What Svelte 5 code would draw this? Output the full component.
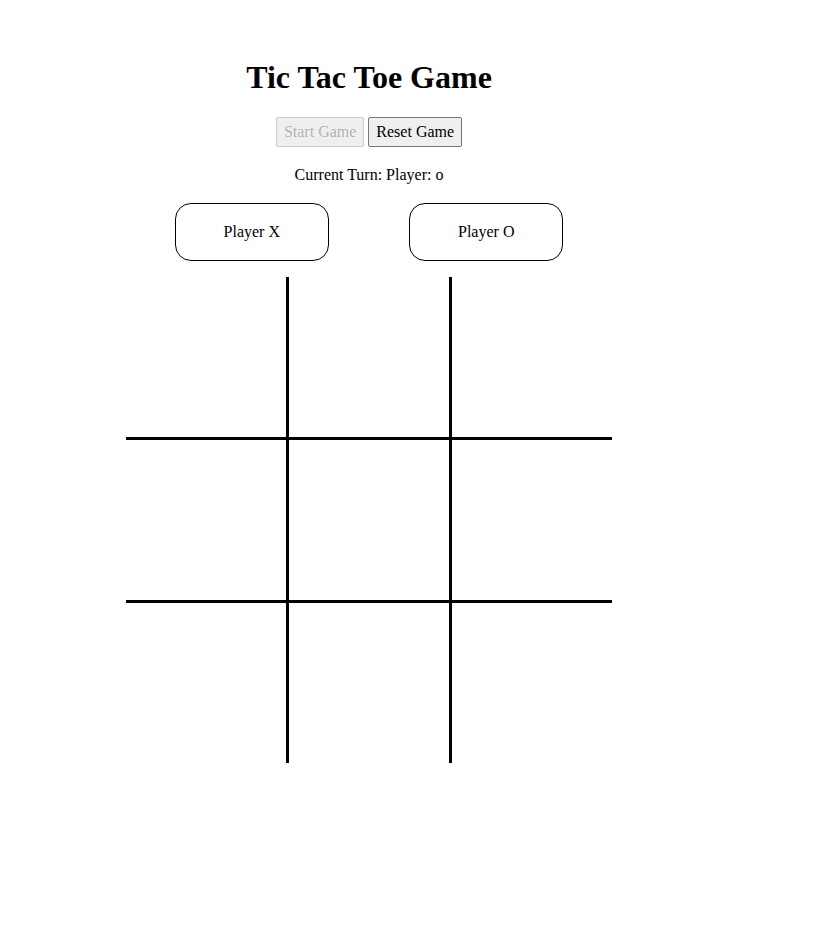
<script>
  let started = $state(true);
  let turn = $state('o');
  let cells = $state(Array(9).fill(''));

  function start() {
    started = true;
  }

  function reset() {
    cells = Array(9).fill('');
    turn = 'o';
    started = false;
  }

  function play(index) {
    if (!started || cells[index]) return;
    cells[index] = turn;
    turn = turn === 'o' ? 'x' : 'o';
  }
</script>

<main>
  <h1>Tic Tac Toe Game</h1>

  <div class="controls">
    <button class="control" type="button" disabled={started} onclick={start}>Start Game</button>
    <button class="control" type="button" onclick={reset}>Reset Game</button>
  </div>

  <p class="turn">Current Turn: Player: {turn}</p>

  <div class="players">
    <div class="player">Player X</div>
    <div class="player">Player O</div>
  </div>

  <div class="board">
    {#each cells as cell, i}
      <button class="cell" type="button" aria-label={`Cell ${i + 1}`} onclick={() => play(i)}>{cell}</button>
    {/each}
  </div>
</main>

<style>
  :global(body) {
    margin: 0;
    background: #fff;
  }

  main {
    box-sizing: border-box;
    display: flex;
    flex-direction: column;
    align-items: center;
    width: 100%;
    max-width: 738px;
    padding: 59px 16px;
    color: #000;
    font-family: 'Liberation Serif', 'Times New Roman', serif;
    font-size: 16px;
    line-height: 18px;
  }

  h1 {
    margin: 0 0 21px;
    font-size: 32px;
    font-weight: 700;
    line-height: 37px;
  }

  .controls {
    display: flex;
    gap: 4px;
  }

  .control {
    padding: 5px 7px;
    border: 1px solid #767676;
    border-radius: 2px;
    background: #efefef;
    color: #000;
    font: inherit;
  }

  .control:disabled {
    border-color: rgba(118, 118, 118, 0.3);
    background: #efefef;
    color: rgba(16, 16, 16, 0.3);
  }

  .turn {
    margin: 19px 0;
  }

  .players {
    display: flex;
    justify-content: center;
    gap: 80px;
    margin-bottom: 16px;
  }

  .player {
    padding: 19px 48px;
    border: 1px solid #000;
    border-radius: 16px;
  }

  .board {
    display: grid;
    grid-template-columns: repeat(3, 1fr);
    gap: 3px;
    width: 100%;
    max-width: 486px;
    background: #000;
  }

  .cell {
    aspect-ratio: 1;
    min-width: 0;
    padding: 0;
    border: 0;
    border-radius: 0;
    background: #fff;
    color: #000;
    font: inherit;
    font-size: 64px;
    line-height: 1;
  }
</style>
